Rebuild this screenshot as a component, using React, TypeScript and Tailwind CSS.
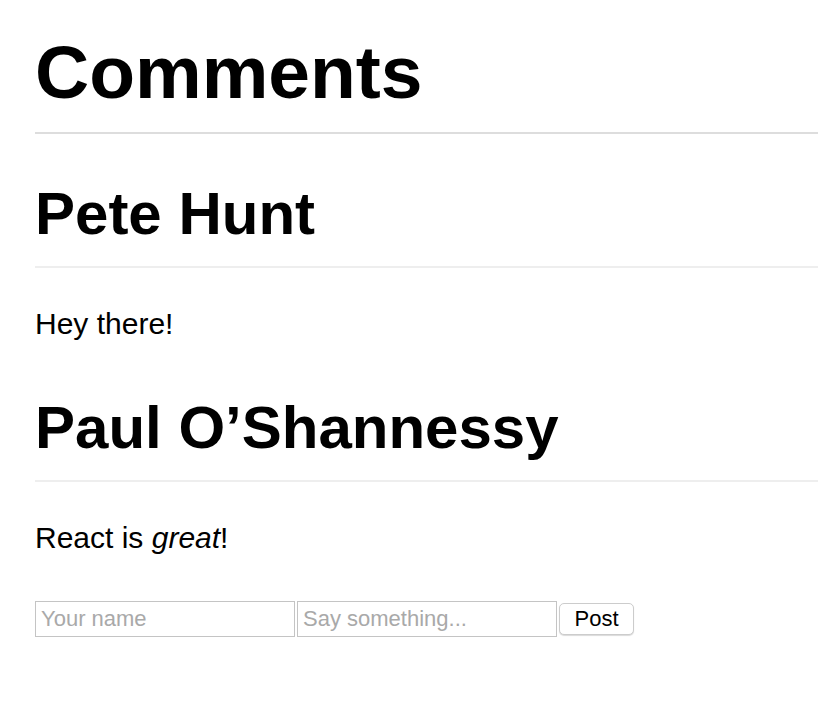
import React from "react";

export default function App() {
  return (
    <div
      className="min-h-[708px] bg-white pl-[35px] pt-[27px] text-black"
      style={{ fontFamily: '"Liberation Sans", Arial, Helvetica, sans-serif' }}
    >
      <h1 className="border-b-2 border-[#dddddd] pb-[15px] text-[75px] font-bold leading-[90px]">
        Comments
      </h1>
      <div>
        <h2 className="mt-[44px] border-b-2 border-[#eeeeee] pb-[16px] text-[60px] font-bold leading-[72px]">
          Pete Hunt
        </h2>
        <p className="mt-[38px] text-[30px] leading-[36px]">Hey there!</p>
        <h2 className="mt-[50px] border-b-2 border-[#eeeeee] pb-[16px] text-[60px] font-bold leading-[72px]">
          Paul O’Shannessy
        </h2>
        <p className="mt-[38px] text-[30px] leading-[36px]">
          React is <em className="italic">great</em>!
        </p>
      </div>
      <form className="mt-[45px] flex items-center gap-[2px]">
        <input
          type="text"
          placeholder="Your name"
          className="h-[36px] w-[260px] border border-[#c4c4c4] px-[5px] text-[22px] text-black outline-none placeholder:text-[#a9a9a9]"
        />
        <input
          type="text"
          placeholder="Say something..."
          className="h-[36px] w-[260px] border border-[#c4c4c4] px-[5px] text-[22px] text-black outline-none placeholder:text-[#a9a9a9]"
        />
        <button
          type="button"
          className="h-[32px] w-[75px] rounded-[5px] border border-[#cccccc] bg-white text-[22px] leading-none text-black shadow-[0_1px_1px_rgba(0,0,0,0.15)]"
        >
          Post
        </button>
      </form>
    </div>
  );
}
